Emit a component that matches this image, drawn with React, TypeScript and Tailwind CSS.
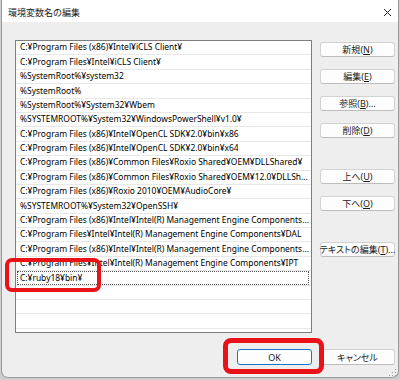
import React from 'react';

const paths = [
    'C:¥Program Files (x86)¥Intel¥iCLS Client¥',
    'C:¥Program Files¥Intel¥iCLS Client¥',
    '%SystemRoot%¥system32',
    '%SystemRoot%',
    '%SystemRoot%¥System32¥Wbem',
    '%SYSTEMROOT%¥System32¥WindowsPowerShell¥v1.0¥',
    'C:¥Program Files (x86)¥Intel¥OpenCL SDK¥2.0¥bin¥x86',
    'C:¥Program Files (x86)¥Intel¥OpenCL SDK¥2.0¥bin¥x64',
    'C:¥Program Files (x86)¥Common Files¥Roxio Shared¥OEM¥DLLShared¥',
    'C:¥Program Files (x86)¥Common Files¥Roxio Shared¥OEM¥12.0¥DLLSh...',
    'C:¥Program Files (x86)¥Roxio 2010¥OEM¥AudioCore¥',
    '%SYSTEMROOT%¥System32¥OpenSSH¥',
    'C:¥Program Files (x86)¥Intel¥Intel(R) Management Engine Components...',
    'C:¥Program Files¥Intel¥Intel(R) Management Engine Components¥DAL',
    'C:¥Program Files (x86)¥Intel¥Intel(R) Management Engine Components...',
    'C:¥Program Files¥Intel¥Intel(R) Management Engine Components¥IPT',
];

const font = "font-['Noto_Sans','Noto_Sans_CJK_JP',sans-serif]";

type BtnProps = { label: string, hot?: string, tail?: string, className?: string, primary?: boolean };

const Btn = ({ label, hot, tail, className = '', primary }: BtnProps) => (
    <div className={`w-[75px] h-[15px] flex items-center justify-center rounded-[3px] border bg-[#fdfdfd] text-[9px] leading-none text-[#1b1b1b] [font-feature-settings:'palt'] whitespace-nowrap ${primary ? 'border-[#1a73c8]' : 'border-[#d2d2d2] border-b-[#bdbdbd]'} ${className}`}>
        <span>{label}</span>
        {hot && <span>(<span className="underline">{hot}</span>)</span>}
        {tail && <span>{tail}</span>}
    </div>
);

export default function App() {
    return (
        <div className={`w-[400px] h-[380px] bg-[#cfcfcf] relative overflow-hidden ${font}`}>
            <div className="ml-[1px] w-[398px] h-[378px] bg-[#eeeeee] border-x border-b border-[#9a9a9a] rounded-b-[7px] flex flex-col overflow-hidden">
                {/* title bar */}
                <div className="h-[22px] shrink-0 bg-white flex items-center justify-between pl-[6px] pr-[6px]">
                    <span className="text-[9px] text-[#1b1b1b] leading-none pt-[2px]">環境変数名の編集</span>
                    <svg width="9" height="9" viewBox="0 0 9 9" className="mt-[2px]">
                        <path d="M1 1L8 8M8 1L1 8" stroke="#222" strokeWidth="1" />
                    </svg>
                </div>

                <div className="flex pl-[13px] pt-[18px] gap-[8px]">
                    {/* list */}
                    <div className="w-[297px] h-[293px] shrink-0 border border-[#7e7e7e] bg-white overflow-hidden flex flex-col text-[8.45px] text-black">
                        {paths.map((p, i) => (
                            <div key={i} className="h-[14.4px] shrink-0 border-b border-[#e8e8e8] pl-[4px] pr-[3px] flex items-center whitespace-nowrap overflow-hidden">
                                {p}
                            </div>
                        ))}
                        <div className="h-[14.4px] shrink-0 border-b border-[#e8e8e8] px-[1px] flex items-stretch">
                            <div className="flex-1 mr-[1px] border border-dotted border-[#555] pl-[2px] flex items-center">C:¥ruby18¥bin¥</div>
                        </div>
                        {[0, 1, 2, 3, 4].map(i => (
                            <div key={i} className="h-[14.4px] shrink-0 border-b border-[#e8e8e8]" />
                        ))}
                    </div>

                    {/* side buttons */}
                    <div className="flex flex-col pt-[2px]">
                        <Btn label="新規" hot="N" />
                        <Btn label="編集" hot="E" className="mt-[12px]" />
                        <Btn label="参照" hot="B" tail="..." className="mt-[12px]" />
                        <Btn label="削除" hot="D" className="mt-[12px]" />
                        <Btn label="上へ" hot="U" className="mt-[31px]" />
                        <Btn label="下へ" hot="O" className="mt-[12px]" />
                        <Btn label="テキストの編集" hot="T" tail="..." className="mt-[31px]" />
                    </div>
                </div>

                {/* bottom buttons */}
                <div className="flex justify-end gap-[8px] pr-[3px] mt-[16px]">
                    <Btn label="OK" primary className="h-[16px]" />
                    <Btn label="キャンセル" className="h-[16px]" />
                </div>
            </div>

            {/* red highlight boxes */}
            <div className="absolute left-[5px] top-[258px] w-[96px] h-[34px] border-[4px] border-[#ea1219] rounded-[7px]" />
            <div className="absolute left-[223px] top-[338px] w-[101px] h-[36px] border-[5px] border-[#ea1219] rounded-[8px]" />

            {/* resize grip */}
            <svg width="8" height="8" viewBox="0 0 8 8" className="absolute left-[389px] top-[369px]">
                <rect x="6" y="0" width="1" height="1" fill="#9a9a9a" />
                <rect x="3" y="3" width="1" height="1" fill="#9a9a9a" />
                <rect x="6" y="3" width="1" height="1" fill="#9a9a9a" />
                <rect x="0" y="6" width="1" height="1" fill="#9a9a9a" />
                <rect x="3" y="6" width="1" height="1" fill="#9a9a9a" />
                <rect x="6" y="6" width="1" height="1" fill="#9a9a9a" />
            </svg>
        </div>
    );
}
